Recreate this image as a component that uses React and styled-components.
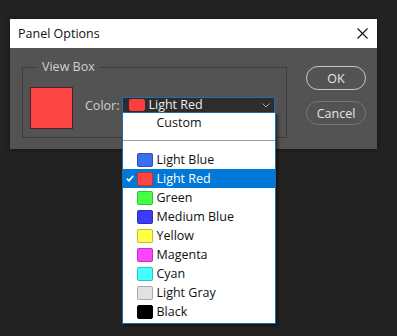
import React from "react";
import styled, { createGlobalStyle } from "styled-components";

const Global = createGlobalStyle`
  html, body { margin: 0; padding: 0; background: #232323; }
  body { font-family: "Open Sans", "Noto Sans", sans-serif; }
  #root { width: 397px; height: 336px; overflow: hidden; }
`;

const Page = styled.div`
  width: 397px;
  height: 336px;
  padding: 19px 0 0 10px;
  box-sizing: border-box;
`;

const Dialog = styled.div`
  width: 367px;
  background: #535353;
  box-shadow: 0 0 6px rgba(0,0,0,0.4);
`;

const TitleBar = styled.div`
  height: 29px;
  background: #ffffff;
  display: flex;
  align-items: center;
  justify-content: space-between;
  padding: 0 9px 0 8px;
  font-size: 12.5px;
  color: #111;
`;

const Body = styled.div`
  display: flex;
  align-items: flex-start;
  padding: 18px 0 11px 12px;
  height: 101px;
  box-sizing: border-box;
`;

const Group = styled.div`
  position: relative;
  width: 265px;
  height: 71px;
  margin-top: 1px;
  border: 1px solid #3c3c3c;
  box-sizing: border-box;
  display: flex;
  align-items: flex-start;
  padding: 19px 0 0 7px;
`;

const Legend = styled.span`
  position: absolute;
  top: -9px;
  left: 14px;
  padding: 0 5px;
  background: #535353;
  color: #d0d0d0;
  font-size: 12.5px;
  line-height: 16px;
`;

const BigSwatch = styled.div`
  width: 43px;
  height: 42px;
  box-sizing: border-box;
  background: #ff4646;
  border: 1px solid #4a2424;
`;

const ColorLabel = styled.span`
  margin: 11px 3px 0 12px;
  color: #cfcfcf;
  font-size: 12.5px;
  line-height: 16px;
`;

const SelectWrap = styled.div`
  position: relative;
  margin-top: 10px;
  width: 153px;
`;

const Select = styled.div`
  height: 15px;
  box-sizing: border-box;
  background: #2d2d2d;
  border: 1px solid #1f6cae;
  border-bottom: none;
  display: flex;
  align-items: center;
  padding-left: 6px;
  color: #ececec;
  font-size: 12.5px;
`;

const Swatch = styled.span`
  width: ${p => p.$w || 16}px;
  height: ${p => p.$h || 14}px;
  box-sizing: border-box;
  background: ${p => p.$c};
  border: 1px solid ${p => p.$b || "rgba(0,0,0,0.25)"};
  border-radius: 2px;
  flex: none;
`;

const SelectText = styled.span`
  margin-left: 3px;
  line-height: 14px;
  flex: 1;
`;

const Chevron = styled.svg`
  margin-right: 4px;
`;

const List = styled.div`
  position: absolute;
  top: 15px;
  left: 0;
  width: 154px;
  box-sizing: border-box;
  background: #ffffff;
  border: 1px solid #1f6cae;
  box-shadow: 2px 2px 3px rgba(0,0,0,0.5);
  padding-bottom: 2px;
`;

const Row = styled.div`
  height: 19px;
  display: flex;
  align-items: center;
  padding-left: 14px;
  background: ${p => (p.$active ? "#0078d7" : "transparent")};
  color: ${p => (p.$active ? "#ffffff" : "#111111")};
  font-size: 12.5px;
  position: relative;
`;

const RowText = styled.span`
  margin-left: ${p => (p.$noSwatch ? 19 : 3)}px;
`;

const Check = styled.svg`
  position: absolute;
  left: 3px;
  top: 6px;
`;

const Separator = styled.div`
  height: 1px;
  background: #a0a0a0;
  margin: 8px 0 9px 0;
`;

const Buttons = styled.div`
  display: flex;
  flex-direction: column;
  gap: 11px;
  margin-left: 19px;
`;

const Button = styled.div`
  width: 60px;
  height: 24px;
  box-sizing: border-box;
  border-radius: 12px;
  border: 1.5px solid ${p => (p.$primary ? "#c8c8c8" : "#787878")};
  display: flex;
  align-items: center;
  justify-content: center;
  color: #e6e6e6;
  font-size: 12.5px;
`;

const colors = [
  ["Light Blue", "#3a6ff0"],
  ["Light Red", "#ff4444"],
  ["Green", "#44ff44"],
  ["Medium Blue", "#3c3cf8"],
  ["Yellow", "#ffff44"],
  ["Magenta", "#ff44ff"],
  ["Cyan", "#44ffff"],
  ["Light Gray", "#e2e2e2"],
  ["Black", "#000000"],
];

export default function App() {
  return (
    <>
      <Global />
      <Page>
        <Dialog>
          <TitleBar>
            <span>Panel Options</span>
            <svg width="11" height="11" viewBox="0 0 11 11">
              <path d="M0.5 0.5 L10.5 10.5 M10.5 0.5 L0.5 10.5" stroke="#111" strokeWidth="1.1" />
            </svg>
          </TitleBar>
          <Body>
            <Group>
              <Legend>View Box</Legend>
              <BigSwatch />
              <ColorLabel>Color:</ColorLabel>
              <SelectWrap>
                <Select>
                  <Swatch $c="#ff3c3c" $w={16} $h={12} $b="#ff3c3c" />
                  <SelectText>Light Red</SelectText>
                  <Chevron width="8" height="5" viewBox="0 0 8 5">
                    <path d="M0.5 0.5 L4 4 L7.5 0.5" fill="none" stroke="#a8a8a8" strokeWidth="1" />
                  </Chevron>
                </Select>
                <List>
                  <Row>
                    <RowText $noSwatch>Custom</RowText>
                  </Row>
                  <Separator />
                  {colors.map(([name, c]) => (
                    <Row key={name} $active={name === "Light Red"}>
                      {name === "Light Red" && (
                        <Check width="8" height="7" viewBox="0 0 8 7">
                          <path d="M0.8 3.6 L3 5.8 L7.2 0.8" fill="none" stroke="#fff" strokeWidth="1.6" />
                        </Check>
                      )}
                      <Swatch $c={c} $b={name === "Black" ? "#000" : "rgba(0,0,0,0.25)"} />
                      <RowText>{name}</RowText>
                    </Row>
                  ))}
                </List>
              </SelectWrap>
            </Group>
            <Buttons>
              <Button $primary>OK</Button>
              <Button>Cancel</Button>
            </Buttons>
          </Body>
        </Dialog>
      </Page>
    </>
  );
}
